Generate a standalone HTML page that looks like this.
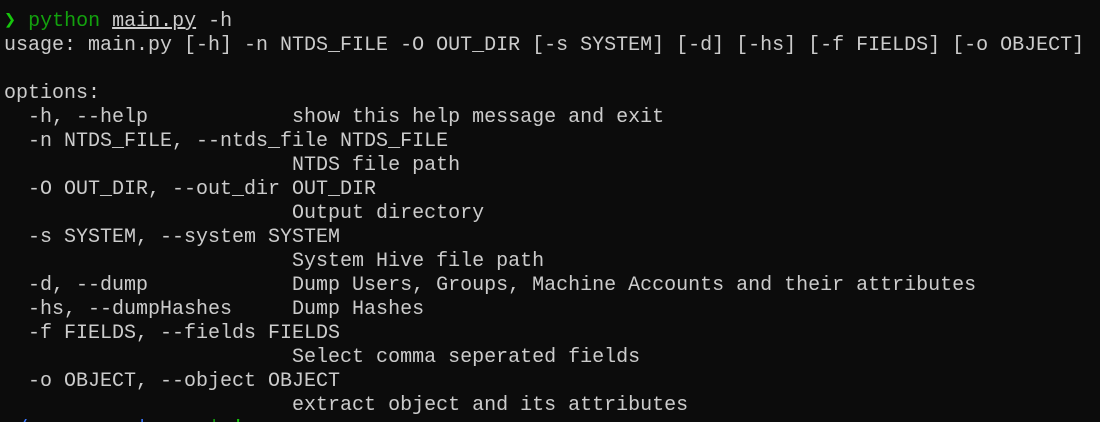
<!DOCTYPE html>
<html><head><meta charset="utf-8"><style>
html,body{margin:0;padding:0;background:#0c0c0c;width:1100px;height:422px;overflow:hidden}
pre{margin:0;padding:10px 0 0 4px;font-family:"Liberation Mono","DejaVu Sans Mono",monospace;font-size:20px;line-height:24px;color:#cccccc;white-space:pre}
.g{color:#16c60c}.p{color:#13a10e}.u{text-decoration:underline}.b{color:#3b78ff}
</style></head><body><pre><span class="g">❯</span> <span class="p">python</span> <span class="u">main.py</span> -h
usage: main.py [-h] -n NTDS_FILE -O OUT_DIR [-s SYSTEM] [-d] [-hs] [-f FIELDS] [-o OBJECT]

options:
  -h, --help            show this help message and exit
  -n NTDS_FILE, --ntds_file NTDS_FILE
                        NTDS file path
  -O OUT_DIR, --out_dir OUT_DIR
                        Output directory
  -s SYSTEM, --system SYSTEM
                        System Hive file path
  -d, --dump            Dump Users, Groups, Machine Accounts and their attributes
  -hs, --dumpHashes     Dump Hashes
  -f FIELDS, --fields FIELDS
                        Select comma seperated fields
  -o OBJECT, --object OBJECT
                        extract object and its attributes
 <span class="b">/</span>         <span class="b">|</span>     <span class="p">|</span> <span class="g">'</span></pre></body></html>
